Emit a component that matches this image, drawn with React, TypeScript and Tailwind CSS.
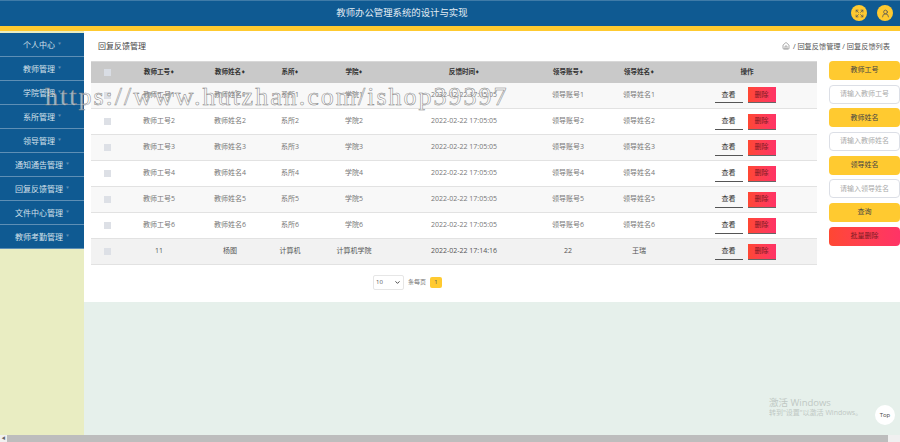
import { ChevronDown, Expand, House, UserRound } from 'lucide-react';

const MENU = ['个人中心', '教师管理', '学院管理', '系所管理', '领导管理', '通知通告管理', '回复反馈管理', '文件中心管理', '教师考勤管理'];

const HEADERS = ['教师工号', '教师姓名', '系所', '学院', '反馈时间', '领导账号', '领导姓名'];

const ROWS = [
  ...[1, 2, 3, 4, 5, 6].map(i => [
    `教师工号${i}`,
    `教师姓名${i}`,
    `系所${i}`,
    `学院${i}`,
    '2022-02-22 17:05:05',
    `领导账号${i}`,
    `领导姓名${i}`,
  ]),
  ['11', '杨图', '计算机', '计算机学院', '2022-02-22 17:14:16', '22', '王瑞'],
];

function SortMark() {
  return <span className="text-[4px]">♦</span>;
}

function FilterField({ label, placeholder }: { label: string; placeholder: string }) {
  return (
    <>
      <div className="flex h-[19px] items-center justify-center rounded-[4px] bg-[#ffca30] text-[#444]">{label}</div>
      <div className="flex h-[19px] items-center justify-center rounded-[4px] border border-[#dcdfe6] bg-white text-[#aaa]">{placeholder}</div>
    </>
  );
}

export default function App() {
  return (
    <div className="relative flex h-[442px] w-[900px] flex-col overflow-hidden bg-white font-['Open_Sans','Noto_Sans_CJK_SC',sans-serif] text-[7px]">
      {/* Header */}
      <header className="relative flex h-[26px] items-center justify-center border-t border-[#3f7ba8] bg-[#0f5a92] pr-[96px]">
        <h1 className="text-[9.4px] text-[#e4edf4]">教师办公管理系统的设计与实现</h1>
        <div className="absolute right-[7px] top-[4px] flex gap-[10px]">
          <span className="flex h-4 w-4 items-center justify-center rounded-full bg-[#ffca30]">
            <Expand className="h-[9px] w-[9px] text-[#555]" strokeWidth={2} />
          </span>
          <span className="flex h-4 w-4 items-center justify-center rounded-full bg-[#ffca30]">
            <UserRound className="h-[9px] w-[9px] text-[#555]" strokeWidth={2} />
          </span>
        </div>
      </header>
      <div className="h-[5px] bg-[#ffca30]" />

      <div className="flex flex-1">
        {/* Sidebar */}
        <aside className="w-[84px] bg-[#e9edc2] pt-[2px]">
          <div className="bg-white">
            {MENU.map(item => (
              <div
                key={item}
                className="flex h-[24px] items-center justify-center gap-[3px] border-b border-[#5e8fb5] bg-[#0f5a92] text-[8px] text-[#d3e0ea]"
              >
                {item}
                <span className="text-[3px] text-[#5e8fb5]">▼</span>
              </div>
            ))}
          </div>
        </aside>

        <main className="flex flex-1 flex-col bg-[#e6f0eb]">
          <div className="h-[271px] bg-white pl-[7px] pt-[4px]">
            {/* Title row */}
            <div className="mb-[5px] flex h-[22px] items-center justify-between pl-[7px] pr-[10px]">
              <span className="text-[8px] text-[#444]">回复反馈管理</span>
              <span className="flex items-center gap-[3px] text-[7.2px] text-[#555]">
                <House className="h-[8px] w-[8px]" strokeWidth={1.5} />/ 回复反馈管理 / 回复反馈列表
              </span>
            </div>

            <div className="flex gap-[12px]">
              <div className="w-[726px]">
                <table className="mt-[-1px] w-full table-fixed border-collapse text-center">
                  <colgroup>
                    <col className="w-[32px]" />
                    <col className="w-[72px]" />
                    <col className="w-[70px]" />
                    <col className="w-[50px]" />
                    <col className="w-[78px]" />
                    <col className="w-[142px]" />
                    <col className="w-[66px]" />
                    <col className="w-[76px]" />
                    <col className="w-[140px]" />
                  </colgroup>
                  <thead>
                    <tr className="h-[21px] border-t border-[#d8d8d8] bg-[#c9c9c9] text-[6.6px] text-[#333]">
                      <th className="p-0">
                        <span className="mx-auto block h-[7px] w-[7px] bg-[#d9dde4]" />
                      </th>
                      {HEADERS.map(h => (
                        <th key={h} className="p-0 font-bold">
                          {h}
                          <SortMark />
                        </th>
                      ))}
                      <th className="p-0 font-bold">操作</th>
                    </tr>
                  </thead>
                  <tbody>
                    {ROWS.map((row, i) => (
                      <tr
                        key={i}
                        className={`h-[26px] border-b border-[#e2e2e2] ${
                          i === 6 ? 'bg-[#f2f2f2] text-[#555]' : i % 2 === 0 ? 'bg-[#f8f8f8] text-[#777]' : 'bg-white text-[#777]'
                        }`}
                      >
                        <td className="p-0">
                          <span className="mx-auto block h-[7px] w-[7px] bg-[#dde0e6]" />
                        </td>
                        {row.map((cell, j) => (
                          <td key={j} className="p-0">
                            {cell}
                          </td>
                        ))}
                        <td className="p-0">
                          <div className="flex items-center justify-center gap-[5px] pr-[4px]">
                            <span className="flex h-[16px] w-[28px] items-center justify-center border-b border-[#555] text-[#333]">查看</span>
                            <span className="flex h-[16px] w-[28px] items-center justify-center border-b border-[#666] bg-gradient-to-r from-[#ff4732] to-[#ff3366] text-[#7a1a22]">
                              删除
                            </span>
                          </div>
                        </td>
                      </tr>
                    ))}
                  </tbody>
                </table>

                {/* Pagination */}
                <div className="mt-[10px] flex items-center justify-center gap-[4px] pr-[93px] text-[#777]">
                  <div className="relative h-[15px] w-[31px]">
                    <select
                      defaultValue="10"
                      className="h-full w-full appearance-none rounded-[2px] border border-[#e6e6e6] bg-white pl-[2px] text-[6px] text-[#555]"
                    >
                      <option value="10">10</option>
                    </select>
                    <ChevronDown className="pointer-events-none absolute right-[3px] top-[4px] h-[7px] w-[7px] text-[#333]" strokeWidth={3} />
                  </div>
                  <span className="text-[6px]">条每页</span>
                  <span className="flex h-[11px] w-[12px] items-center justify-center rounded-[2px] bg-[#ffca30] text-[6px] text-[#555]">1</span>
                </div>
              </div>

              {/* Filters */}
              <div className="mt-[-1px] flex w-[71px] flex-col gap-[4.67px] text-center text-[7px]">
                <FilterField label="教师工号" placeholder="请输入教师工号" />
                <FilterField label="教师姓名" placeholder="请输入教师姓名" />
                <FilterField label="领导姓名" placeholder="请输入领导姓名" />
                <div className="flex h-[19px] items-center justify-center rounded-[4px] bg-[#ffca30] text-[#444]">查询</div>
                <div className="flex h-[19px] items-center justify-center rounded-[4px] bg-gradient-to-r from-[#ff4732] to-[#ff3366] text-[#7a1a22]">批量删除</div>
              </div>
            </div>
          </div>
        </main>
      </div>

      {/* Horizontal scrollbar */}
      <div className="flex h-[7px] items-center bg-[#f0f0f0]">
        <span className="w-[7px] text-center text-[4px] leading-none text-[#666]">◀</span>
        <div className="h-full w-[881px] bg-[#bdbdbd]" />
      </div>

      {/* Overlays */}
      <div className="pointer-events-none absolute left-[45px] top-[80px] whitespace-nowrap font-['Liberation_Serif',serif] text-[26px] leading-[34px] tracking-[2px] text-white/60 [-webkit-text-stroke:0.5px_#808080]">
        https://www.hutzhan.com/ishop39397
      </div>
      <div className="pointer-events-none absolute left-[769px] top-[397px] text-[#c0c8c4]">
        <div className="text-[9.5px] leading-[12px]">激活 Windows</div>
        <div className="mt-[-1px] text-[7px] leading-[10px]">转到"设置"以激活 Windows。</div>
      </div>
      <div className="absolute left-[875px] top-[405px] flex h-[20px] w-[20px] items-center justify-center rounded-full bg-white text-[6px] text-[#444]">
        Top
      </div>
    </div>
  );
}
